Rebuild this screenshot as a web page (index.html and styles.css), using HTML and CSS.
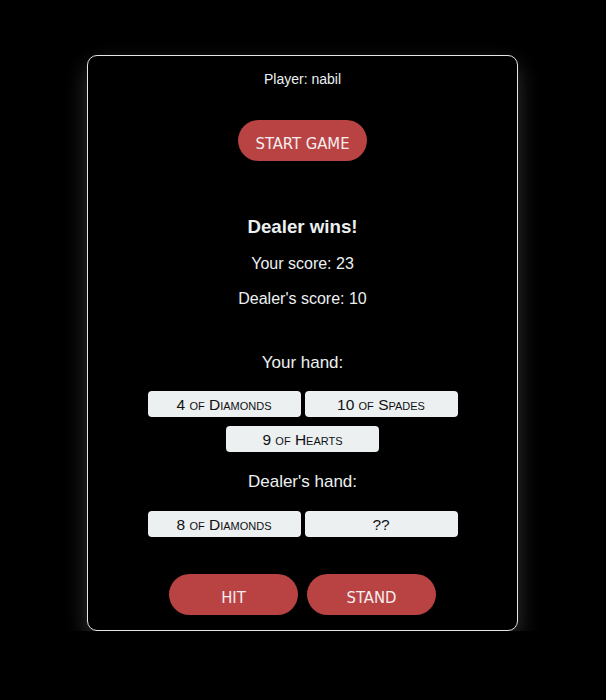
FILE: index.html
```html
<!DOCTYPE html>
<html>
<head>
<meta charset="utf-8">
<link rel="stylesheet" href="styles.css">
</head>
<body>
<div class="table">
  <div class="player">Player: nabil</div>
  <button class="btn start">START GAME</button>
  <div class="result">Dealer wins!</div>
  <div class="score s1">Your score: 23</div>
  <div class="score s2">Dealer's score: 10</div>
  <div class="hand-title h1">Your hand:</div>
  <div class="cards">
    <div class="card">4 of Diamonds</div>
    <div class="card">10 of Spades</div>
    <div class="card">9 of Hearts</div>
  </div>
  <div class="hand-title h2">Dealer's hand:</div>
  <div class="cards">
    <div class="card">8 of Diamonds</div>
    <div class="card">??</div>
  </div>
  <div class="actions">
    <button class="btn">HIT</button>
    <button class="btn">STAND</button>
  </div>
</div>
</body>
</html>
```
FILE: styles.css
```css
html, body {
  margin: 0;
  padding: 0;
  background: #000;
}
body {
  font-family: "Liberation Sans", Arial, sans-serif;
  color: #ecf0f1;
  padding-top: 55px;
}
.table {
  width: 429px;
  margin: 0 0 0 87px;
  border: 1px solid #e6e6e6;
  border-radius: 10px;
  box-shadow: 0 10px 22px rgba(255,255,255,0.2);
  display: flex;
  flex-direction: column;
  align-items: center;
  padding: 15px 0 14px;
  height: 545px;
  box-sizing: content-box;
}
.player {
  font-size: 14px;
  line-height: 16px;
}
.btn {
  width: 129px;
  height: 41px;
  border: none;
  border-radius: 21px;
  background: #b94343;
  color: #f5eef0;
  font-family: "DejaVu Sans Condensed", "DejaVu Sans", sans-serif;
  font-size: 16.5px;
  padding: 5px 0 0;
  cursor: pointer;
}
.start { margin-top: 33px; }
.result {
  margin-top: 55px;
  font-size: 18.72px;
  line-height: 22px;
  font-weight: bold;
}
.score {
  font-size: 16px;
  line-height: 18px;
}
.s1 { margin-top: 17px; }
.s2 { margin-top: 17px; }
.hand-title {
  font-size: 17px;
  line-height: 20px;
}
.h1 { margin-top: 45px; }
.h2 { margin-top: 20px; }
.cards {
  margin-top: 18px;
  width: 310px;
  display: flex;
  flex-wrap: wrap;
  justify-content: center;
  gap: 9px 4px;
}
.h2 + .cards { margin-top: 19px; }
.card {
  width: 153px;
  height: 26px;
  background: #ecf0f1;
  color: #111;
  border-radius: 4px;
  font-size: 15.5px;
  font-variant: small-caps;
  display: flex;
  align-items: center;
  justify-content: center;
  padding-top: 1px;
  box-sizing: border-box;
}
.actions {
  margin-top: 37px;
  display: flex;
  gap: 9px;
}
```
